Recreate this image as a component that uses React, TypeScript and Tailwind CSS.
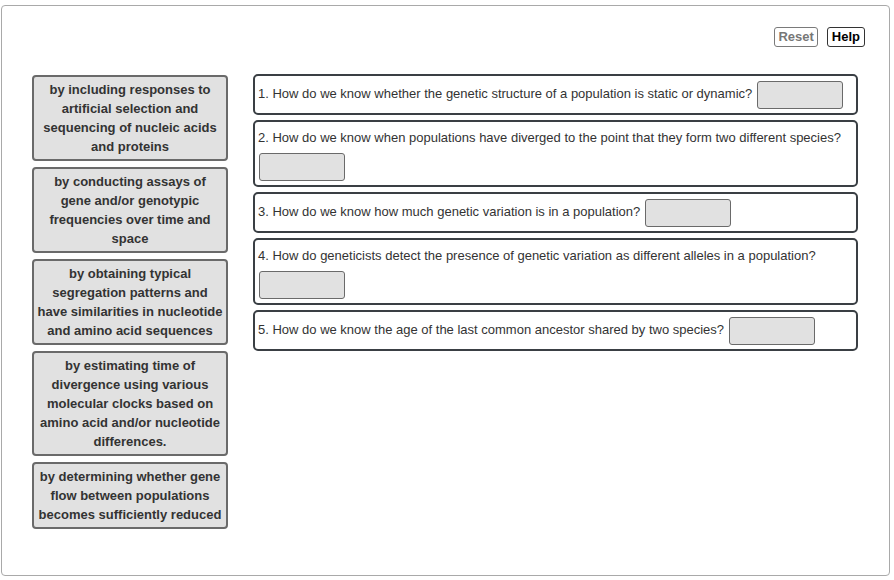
import React from "react";

const answers = [
  ["by including responses to", "artificial selection and", "sequencing of nucleic acids", "and proteins"],
  ["by conducting assays of", "gene and/or genotypic", "frequencies over time and", "space"],
  ["by obtaining typical", "segregation patterns and", "have similarities in nucleotide", "and amino acid sequences"],
  ["by estimating time of", "divergence using various", "molecular clocks based on", "amino acid and/or nucleotide", "differences."],
  ["by determining whether gene", "flow between populations", "becomes sufficiently reduced"],
];

const questions = [
  "1. How do we know whether the genetic structure of a population is static or dynamic?",
  "2. How do we know when populations have diverged to the point that they form two different species?",
  "3. How do we know how much genetic variation is in a population?",
  "4. How do geneticists detect the presence of genetic variation as different alleles in a population?",
  "5. How do we know the age of the last common ancestor shared by two species?",
];

export default function App() {
  return (
    <div className="w-[894px] h-[580px] bg-white" style={{ fontFamily: '"Liberation Sans", Arial, sans-serif' }}>
      <div className="ml-[1px] mt-[5px] w-[889px] h-[571px] border border-[#a9a9a9] rounded-[4px] flex flex-col">
        <div className="flex justify-end gap-[9px] pt-[21px] pr-[24px]">
          <button className="h-[20px] px-[3px] border border-[#7a7a7a] rounded-[3px] text-[13px] font-bold text-[#777] leading-[18px] bg-white">
            Reset
          </button>
          <button className="h-[20px] px-[4px] border border-[#333] rounded-[3px] text-[13px] font-bold text-black leading-[18px] bg-white">
            Help
          </button>
        </div>
        <div className="flex items-start pl-[30px] pr-[31px] mt-[27px]">
          <div className="w-[196px] flex flex-col gap-[6px] mt-[1px]">
            {answers.map((a, i) => (
              <div
                key={i}
                className="border-2 border-[#6a6a6a] rounded-[4px] bg-[#e1e1e1] px-[2px] py-[3px] text-center text-[13px] font-bold leading-[19px] text-[#333]"
              >
                {a.map((line, j) => (
                  <div key={j} className="whitespace-nowrap">
                    {line}
                  </div>
                ))}
              </div>
            ))}
          </div>
          <div className="flex-1 ml-[25px] flex flex-col gap-[5px]">
            {questions.map((q, i) => (
              <div
                key={i}
                className="border-2 border-[#3a3f44] rounded-[5px] px-[3px] pt-[3px] pb-[2px] text-[13px] leading-[26px] text-[#333]"
              >
                {q}{" "}
                <span className="inline-block align-middle my-[2px] ml-[1px] w-[86px] h-[28px] bg-[#e1e1e1] border border-[#6a6a6a] rounded-[3px]" />
              </div>
            ))}
          </div>
        </div>
      </div>
    </div>
  );
}
